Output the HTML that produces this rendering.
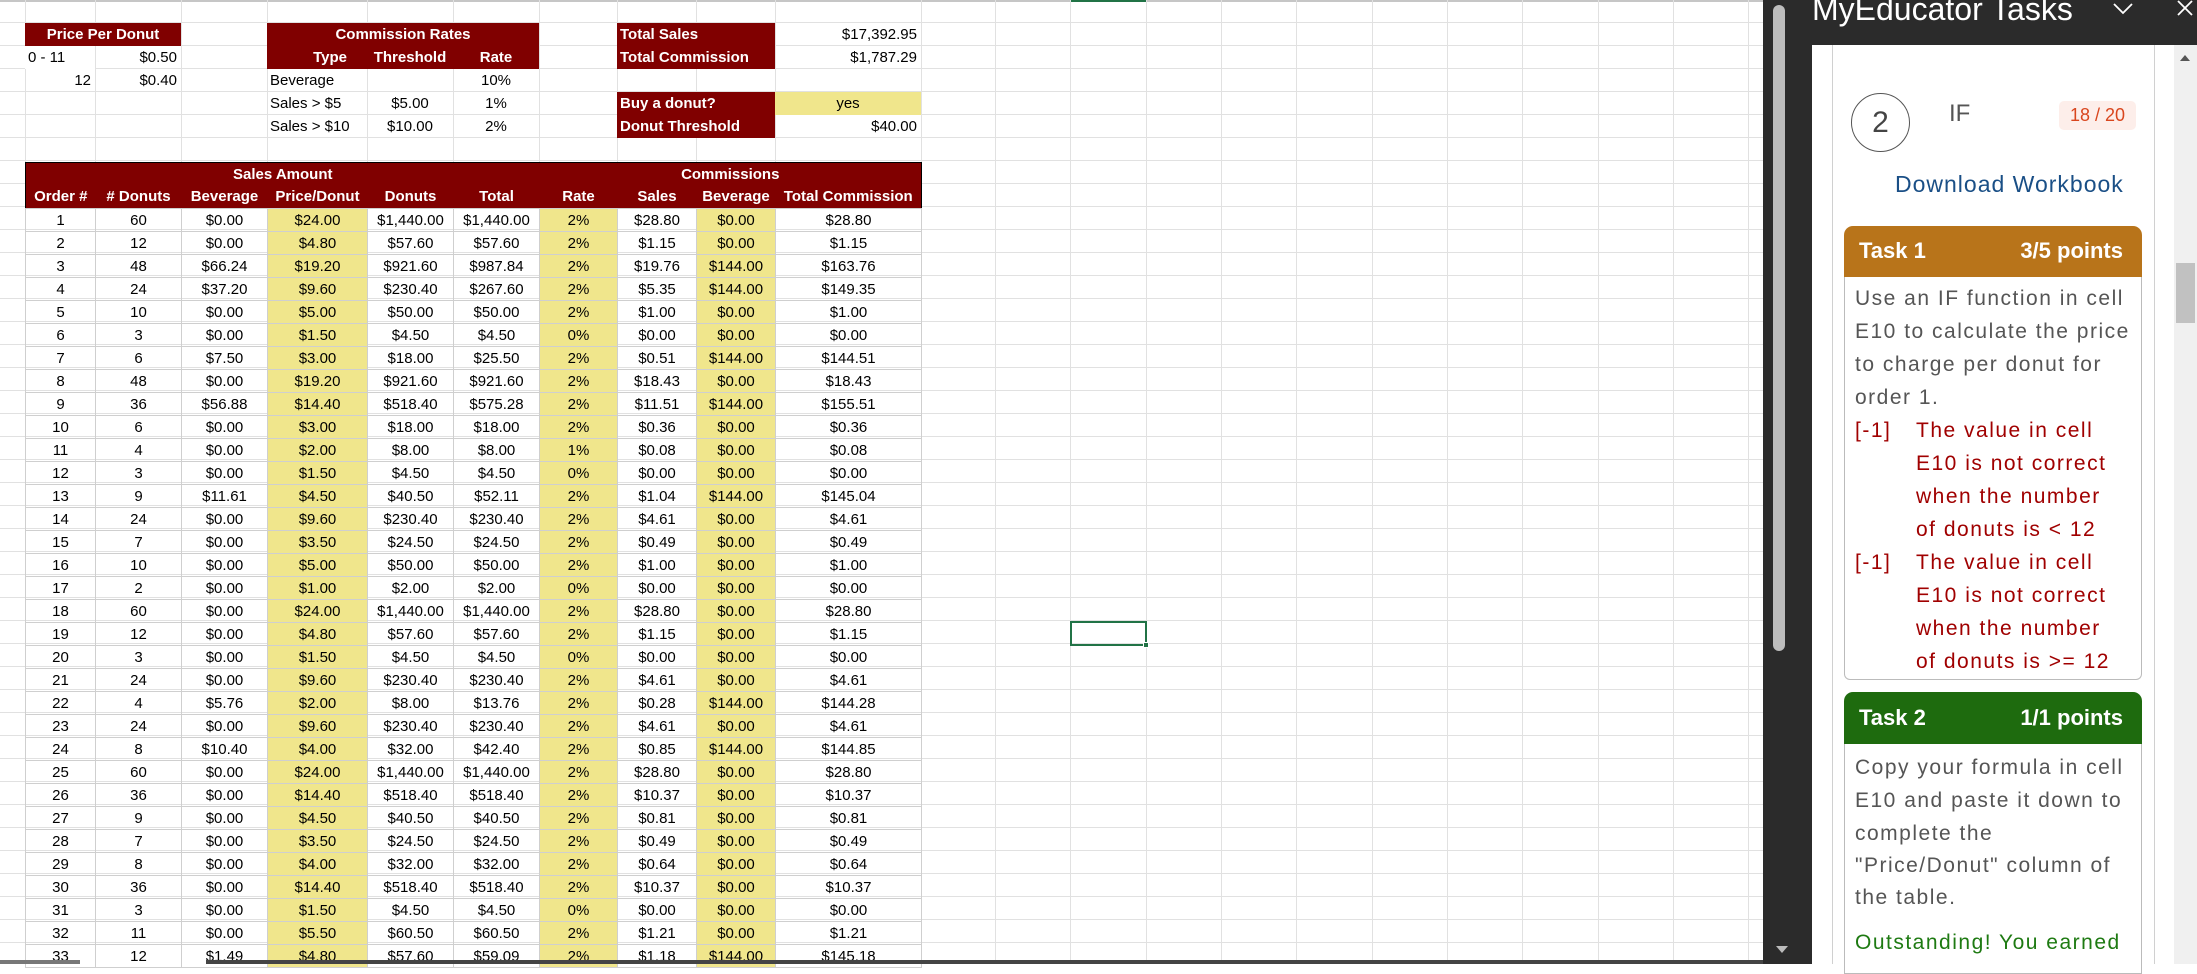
<!DOCTYPE html>
<html><head><meta charset="utf-8"><style>
*{margin:0;padding:0;box-sizing:border-box}
body{width:2197px;height:964px;overflow:hidden;background:#fff;position:relative;font-family:"Liberation Sans Narrow","Liberation Sans",sans-serif;font-size:15px;color:#000}
.grid{position:absolute;left:0;top:0;width:1765px;height:964px;
background-image:repeating-linear-gradient(to bottom,transparent 0,transparent 22px,#e1e1e1 22px,#e1e1e1 23px);}
.v{position:absolute;top:0;width:1px;height:964px;background:#e1e1e1}
.c{position:absolute;height:23px;line-height:23px;white-space:nowrap}
.dr{background:#800000;color:#fff;font-weight:bold}
.y{background:#f0e68c}
table{position:absolute;left:25px;top:162px;border-collapse:collapse;table-layout:fixed;border:1.5px solid #000}
td{height:23px;text-align:center;border:1px solid #cfcfcf;padding:0;white-space:nowrap;line-height:21px}
tr.h td{background:#800000;color:#fff;font-weight:bold;border:none}
td:nth-child(4),td:nth-child(7),td:nth-child(9){background:#f0e68c}
tr.h td{background:#800000}
.pane{position:absolute;left:1763px;top:0;width:434px;height:964px;background:#2b2b2b}
.ptxt{font-family:"Liberation Sans",sans-serif}
.line{position:absolute;left:1855px;font-family:"Liberation Sans",sans-serif;font-size:21px;letter-spacing:1.5px;color:#555;white-space:nowrap;line-height:33px}
.red{color:#a00000}
</style></head><body>
<div class="grid"></div>
<div style="position:absolute;left:0;top:0;width:1765px;height:2px;background:#c6c6c6"></div>
<div style="position:absolute;left:1070px;top:0;width:76px;height:2px;background:#217346"></div>
<div class="v" style="left:25px"></div><div class="v" style="left:95px"></div><div class="v" style="left:181px"></div><div class="v" style="left:267px"></div><div class="v" style="left:367px"></div><div class="v" style="left:453px"></div><div class="v" style="left:539px"></div><div class="v" style="left:617px"></div><div class="v" style="left:696px"></div><div class="v" style="left:775px"></div><div class="v" style="left:921px"></div><div class="v" style="left:995px"></div><div class="v" style="left:1070px"></div><div class="v" style="left:1146px"></div><div class="v" style="left:1221px"></div><div class="v" style="left:1296px"></div><div class="v" style="left:1372px"></div><div class="v" style="left:1447px"></div><div class="v" style="left:1522px"></div><div class="v" style="left:1598px"></div><div class="v" style="left:1673px"></div><div class="v" style="left:1748px"></div>

<div class="c dr" style="left:25px;top:23px;width:156px;text-align:center">Price Per Donut</div>
<div class="c" style="left:25px;top:46px;width:70px;background:#fff;padding-left:3px">0 - 11</div>
<div class="c" style="left:95px;top:46px;width:86px;text-align:right;padding-right:4px">$0.50</div>
<div class="c" style="left:25px;top:69px;width:70px;text-align:right;padding-right:4px">12</div>
<div class="c" style="left:95px;top:69px;width:86px;text-align:right;padding-right:4px">$0.40</div>

<div class="c dr" style="left:267px;top:23px;width:272px;height:46px;"></div>
<div class="c" style="left:267px;top:23px;width:272px;text-align:center;color:#fff;font-weight:bold">Commission Rates</div>
<div class="c" style="left:267px;top:46px;width:100px;text-align:right;padding-right:20px;color:#fff;font-weight:bold">Type</div>
<div class="c" style="left:367px;top:46px;width:86px;text-align:center;color:#fff;font-weight:bold">Threshold</div>
<div class="c" style="left:453px;top:46px;width:86px;text-align:center;color:#fff;font-weight:bold">Rate</div>
<div class="c" style="left:270px;top:69px">Beverage</div>
<div class="c" style="left:453px;top:69px;width:86px;text-align:center">10%</div>
<div class="c" style="left:270px;top:92px">Sales &gt; $5</div>
<div class="c" style="left:367px;top:92px;width:86px;text-align:center">$5.00</div>
<div class="c" style="left:453px;top:92px;width:86px;text-align:center">1%</div>
<div class="c" style="left:270px;top:115px">Sales &gt; $10</div>
<div class="c" style="left:367px;top:115px;width:86px;text-align:center">$10.00</div>
<div class="c" style="left:453px;top:115px;width:86px;text-align:center">2%</div>

<div class="c dr" style="left:617px;top:23px;width:158px;padding-left:3px">Total Sales</div>
<div class="c dr" style="left:617px;top:46px;width:158px;padding-left:3px">Total Commission</div>
<div class="c" style="left:775px;top:23px;width:146px;text-align:right;padding-right:4px">$17,392.95</div>
<div class="c" style="left:775px;top:46px;width:146px;text-align:right;padding-right:4px">$1,787.29</div>
<div class="c dr" style="left:617px;top:92px;width:158px;padding-left:3px">Buy a donut?</div>
<div class="c dr" style="left:617px;top:115px;width:158px;padding-left:3px">Donut Threshold</div>
<div class="c y" style="left:775px;top:92px;width:146px;text-align:center">yes</div>
<div class="c" style="left:775px;top:115px;width:146px;text-align:right;padding-right:4px">$40.00</div>

<table>
<colgroup><col style="width:70px"><col style="width:86px"><col style="width:86px"><col style="width:100px"><col style="width:86px"><col style="width:86px"><col style="width:78px"><col style="width:79px"><col style="width:79px"><col style="width:146px"></colgroup>
<tr class="h"><td colspan="6">Sales Amount</td><td colspan="4">Commissions</td></tr>
<tr class="h"><td>Order #</td><td># Donuts</td><td>Beverage</td><td>Price/Donut</td><td>Donuts</td><td>Total</td><td>Rate</td><td>Sales</td><td>Beverage</td><td>Total Commission</td></tr>
<tr><td>1</td><td>60</td><td>$0.00</td><td>$24.00</td><td>$1,440.00</td><td>$1,440.00</td><td>2%</td><td>$28.80</td><td>$0.00</td><td>$28.80</td></tr>
<tr><td>2</td><td>12</td><td>$0.00</td><td>$4.80</td><td>$57.60</td><td>$57.60</td><td>2%</td><td>$1.15</td><td>$0.00</td><td>$1.15</td></tr>
<tr><td>3</td><td>48</td><td>$66.24</td><td>$19.20</td><td>$921.60</td><td>$987.84</td><td>2%</td><td>$19.76</td><td>$144.00</td><td>$163.76</td></tr>
<tr><td>4</td><td>24</td><td>$37.20</td><td>$9.60</td><td>$230.40</td><td>$267.60</td><td>2%</td><td>$5.35</td><td>$144.00</td><td>$149.35</td></tr>
<tr><td>5</td><td>10</td><td>$0.00</td><td>$5.00</td><td>$50.00</td><td>$50.00</td><td>2%</td><td>$1.00</td><td>$0.00</td><td>$1.00</td></tr>
<tr><td>6</td><td>3</td><td>$0.00</td><td>$1.50</td><td>$4.50</td><td>$4.50</td><td>0%</td><td>$0.00</td><td>$0.00</td><td>$0.00</td></tr>
<tr><td>7</td><td>6</td><td>$7.50</td><td>$3.00</td><td>$18.00</td><td>$25.50</td><td>2%</td><td>$0.51</td><td>$144.00</td><td>$144.51</td></tr>
<tr><td>8</td><td>48</td><td>$0.00</td><td>$19.20</td><td>$921.60</td><td>$921.60</td><td>2%</td><td>$18.43</td><td>$0.00</td><td>$18.43</td></tr>
<tr><td>9</td><td>36</td><td>$56.88</td><td>$14.40</td><td>$518.40</td><td>$575.28</td><td>2%</td><td>$11.51</td><td>$144.00</td><td>$155.51</td></tr>
<tr><td>10</td><td>6</td><td>$0.00</td><td>$3.00</td><td>$18.00</td><td>$18.00</td><td>2%</td><td>$0.36</td><td>$0.00</td><td>$0.36</td></tr>
<tr><td>11</td><td>4</td><td>$0.00</td><td>$2.00</td><td>$8.00</td><td>$8.00</td><td>1%</td><td>$0.08</td><td>$0.00</td><td>$0.08</td></tr>
<tr><td>12</td><td>3</td><td>$0.00</td><td>$1.50</td><td>$4.50</td><td>$4.50</td><td>0%</td><td>$0.00</td><td>$0.00</td><td>$0.00</td></tr>
<tr><td>13</td><td>9</td><td>$11.61</td><td>$4.50</td><td>$40.50</td><td>$52.11</td><td>2%</td><td>$1.04</td><td>$144.00</td><td>$145.04</td></tr>
<tr><td>14</td><td>24</td><td>$0.00</td><td>$9.60</td><td>$230.40</td><td>$230.40</td><td>2%</td><td>$4.61</td><td>$0.00</td><td>$4.61</td></tr>
<tr><td>15</td><td>7</td><td>$0.00</td><td>$3.50</td><td>$24.50</td><td>$24.50</td><td>2%</td><td>$0.49</td><td>$0.00</td><td>$0.49</td></tr>
<tr><td>16</td><td>10</td><td>$0.00</td><td>$5.00</td><td>$50.00</td><td>$50.00</td><td>2%</td><td>$1.00</td><td>$0.00</td><td>$1.00</td></tr>
<tr><td>17</td><td>2</td><td>$0.00</td><td>$1.00</td><td>$2.00</td><td>$2.00</td><td>0%</td><td>$0.00</td><td>$0.00</td><td>$0.00</td></tr>
<tr><td>18</td><td>60</td><td>$0.00</td><td>$24.00</td><td>$1,440.00</td><td>$1,440.00</td><td>2%</td><td>$28.80</td><td>$0.00</td><td>$28.80</td></tr>
<tr><td>19</td><td>12</td><td>$0.00</td><td>$4.80</td><td>$57.60</td><td>$57.60</td><td>2%</td><td>$1.15</td><td>$0.00</td><td>$1.15</td></tr>
<tr><td>20</td><td>3</td><td>$0.00</td><td>$1.50</td><td>$4.50</td><td>$4.50</td><td>0%</td><td>$0.00</td><td>$0.00</td><td>$0.00</td></tr>
<tr><td>21</td><td>24</td><td>$0.00</td><td>$9.60</td><td>$230.40</td><td>$230.40</td><td>2%</td><td>$4.61</td><td>$0.00</td><td>$4.61</td></tr>
<tr><td>22</td><td>4</td><td>$5.76</td><td>$2.00</td><td>$8.00</td><td>$13.76</td><td>2%</td><td>$0.28</td><td>$144.00</td><td>$144.28</td></tr>
<tr><td>23</td><td>24</td><td>$0.00</td><td>$9.60</td><td>$230.40</td><td>$230.40</td><td>2%</td><td>$4.61</td><td>$0.00</td><td>$4.61</td></tr>
<tr><td>24</td><td>8</td><td>$10.40</td><td>$4.00</td><td>$32.00</td><td>$42.40</td><td>2%</td><td>$0.85</td><td>$144.00</td><td>$144.85</td></tr>
<tr><td>25</td><td>60</td><td>$0.00</td><td>$24.00</td><td>$1,440.00</td><td>$1,440.00</td><td>2%</td><td>$28.80</td><td>$0.00</td><td>$28.80</td></tr>
<tr><td>26</td><td>36</td><td>$0.00</td><td>$14.40</td><td>$518.40</td><td>$518.40</td><td>2%</td><td>$10.37</td><td>$0.00</td><td>$10.37</td></tr>
<tr><td>27</td><td>9</td><td>$0.00</td><td>$4.50</td><td>$40.50</td><td>$40.50</td><td>2%</td><td>$0.81</td><td>$0.00</td><td>$0.81</td></tr>
<tr><td>28</td><td>7</td><td>$0.00</td><td>$3.50</td><td>$24.50</td><td>$24.50</td><td>2%</td><td>$0.49</td><td>$0.00</td><td>$0.49</td></tr>
<tr><td>29</td><td>8</td><td>$0.00</td><td>$4.00</td><td>$32.00</td><td>$32.00</td><td>2%</td><td>$0.64</td><td>$0.00</td><td>$0.64</td></tr>
<tr><td>30</td><td>36</td><td>$0.00</td><td>$14.40</td><td>$518.40</td><td>$518.40</td><td>2%</td><td>$10.37</td><td>$0.00</td><td>$10.37</td></tr>
<tr><td>31</td><td>3</td><td>$0.00</td><td>$1.50</td><td>$4.50</td><td>$4.50</td><td>0%</td><td>$0.00</td><td>$0.00</td><td>$0.00</td></tr>
<tr><td>32</td><td>11</td><td>$0.00</td><td>$5.50</td><td>$60.50</td><td>$60.50</td><td>2%</td><td>$1.21</td><td>$0.00</td><td>$1.21</td></tr>
<tr><td>33</td><td>12</td><td>$1.49</td><td>$4.80</td><td>$57.60</td><td>$59.09</td><td>2%</td><td>$1.18</td><td>$144.00</td><td>$145.18</td></tr>
</table>

<div style="position:absolute;left:1070px;top:621px;width:77px;height:25px;border:2px solid #217346"></div>
<div style="position:absolute;left:1143px;top:642px;width:6px;height:6px;background:#217346;border:1px solid #fff"></div>

<div style="position:absolute;left:0;top:960px;width:80px;height:4px;background:#777"></div>
<div style="position:absolute;left:206px;top:960px;width:1560px;height:4px;background:#444"></div>

<div class="pane"></div>
<div style="position:absolute;left:1773px;top:5px;width:12px;height:646px;background:#bdbdbd;border-radius:6px"></div>
<div style="position:absolute;left:1776px;top:946px;width:0;height:0;border-left:6px solid transparent;border-right:6px solid transparent;border-top:7px solid #bbb"></div>
<div class="ptxt" style="position:absolute;left:1812px;top:-9px;color:#fff;font-size:32px;white-space:nowrap">MyEducator Tasks</div>
<svg style="position:absolute;left:2112px;top:2px" width="22" height="14"><path d="M2 2 L11 11 L20 2" stroke="#fff" stroke-width="1.8" fill="none"/></svg>
<svg style="position:absolute;left:2176px;top:0px" width="18" height="18"><path d="M2 1 L16 15 M16 1 L2 15" stroke="#fff" stroke-width="1.8"/></svg>
<div style="position:absolute;left:1812px;top:45px;width:362px;height:919px;background:#fff"></div>
<div style="position:absolute;left:2174px;top:45px;width:23px;height:919px;background:#f0f0f0"></div>
<div style="position:absolute;left:2180px;top:55px;width:0;height:0;border-left:5px solid transparent;border-right:5px solid transparent;border-bottom:6px solid #555"></div>
<div style="position:absolute;left:2176px;top:263px;width:19px;height:60px;background:#c1c1c1"></div>
<div style="position:absolute;left:1832px;top:45px;width:1px;height:919px;background:#d0d0d0"></div>
<div style="position:absolute;left:2154px;top:45px;width:1px;height:919px;background:#d0d0d0"></div>

<div style="position:absolute;left:1851px;top:93px;width:59px;height:59px;border:1.5px solid #555;border-radius:50%;text-align:center;line-height:57px;font-family:'Liberation Sans',sans-serif;font-size:30px;color:#444">2</div>
<div class="ptxt" style="position:absolute;left:1949px;top:100px;font-size:24px;color:#555">IF</div>
<div class="ptxt" style="position:absolute;left:2059px;top:101px;width:77px;height:29px;background:#fdeeea;border-radius:5px;text-align:center;line-height:29px;font-size:18px;color:#d9461e">18 / 20</div>
<div class="ptxt" style="position:absolute;left:1895px;top:171px;font-size:23px;letter-spacing:1px;color:#1a4f86;white-space:nowrap">Download Workbook</div>

<div style="position:absolute;left:1844px;top:226px;width:298px;height:51px;background:#b8741a;border-radius:9px 9px 0 0"></div>
<div class="ptxt" style="position:absolute;left:1859px;top:238px;font-size:22px;color:#fff;font-weight:bold">Task 1</div>
<div class="ptxt" style="position:absolute;right:74px;top:238px;font-size:22px;color:#fff;font-weight:bold">3/5 points</div>
<div style="position:absolute;left:1844px;top:277px;width:298px;height:403px;border:1px solid #bbb;border-top:none;border-radius:0 0 6px 6px"></div>
<div class="line" style="top:282px">Use an IF function in cell</div>
<div class="line" style="top:315px">E10 to calculate the price</div>
<div class="line" style="top:348px">to charge per donut for</div>
<div class="line" style="top:381px">order 1.</div>
<div class="line red" style="top:414px">[-1]</div><div class="line red" style="left:1916px;top:414px">The value in cell</div>
<div class="line red" style="left:1916px;top:447px">E10 is not correct</div>
<div class="line red" style="left:1916px;top:480px">when the number</div>
<div class="line red" style="left:1916px;top:513px">of donuts is &lt; 12</div>
<div class="line red" style="top:546px">[-1]</div><div class="line red" style="left:1916px;top:546px">The value in cell</div>
<div class="line red" style="left:1916px;top:579px">E10 is not correct</div>
<div class="line red" style="left:1916px;top:612px">when the number</div>
<div class="line red" style="left:1916px;top:645px">of donuts is &gt;= 12</div>

<div style="position:absolute;left:1844px;top:692px;width:298px;height:52px;background:#1e6b0e;border-radius:9px 9px 0 0"></div>
<div class="ptxt" style="position:absolute;left:1859px;top:705px;font-size:22px;color:#fff;font-weight:bold">Task 2</div>
<div class="ptxt" style="position:absolute;right:74px;top:705px;font-size:22px;color:#fff;font-weight:bold">1/1 points</div>
<div style="position:absolute;left:1844px;top:744px;width:298px;height:230px;border:1px solid #bbb;border-top:none"></div>
<div class="line" style="top:751px">Copy your formula in cell</div>
<div class="line" style="top:784px">E10 and paste it down to</div>
<div class="line" style="top:817px">complete the</div>
<div class="line" style="top:849px">"Price/Donut" column of</div>
<div class="line" style="top:881px">the table.</div>
<div class="line" style="top:926px;color:#1e7a12">Outstanding! You earned</div>
</body></html>
